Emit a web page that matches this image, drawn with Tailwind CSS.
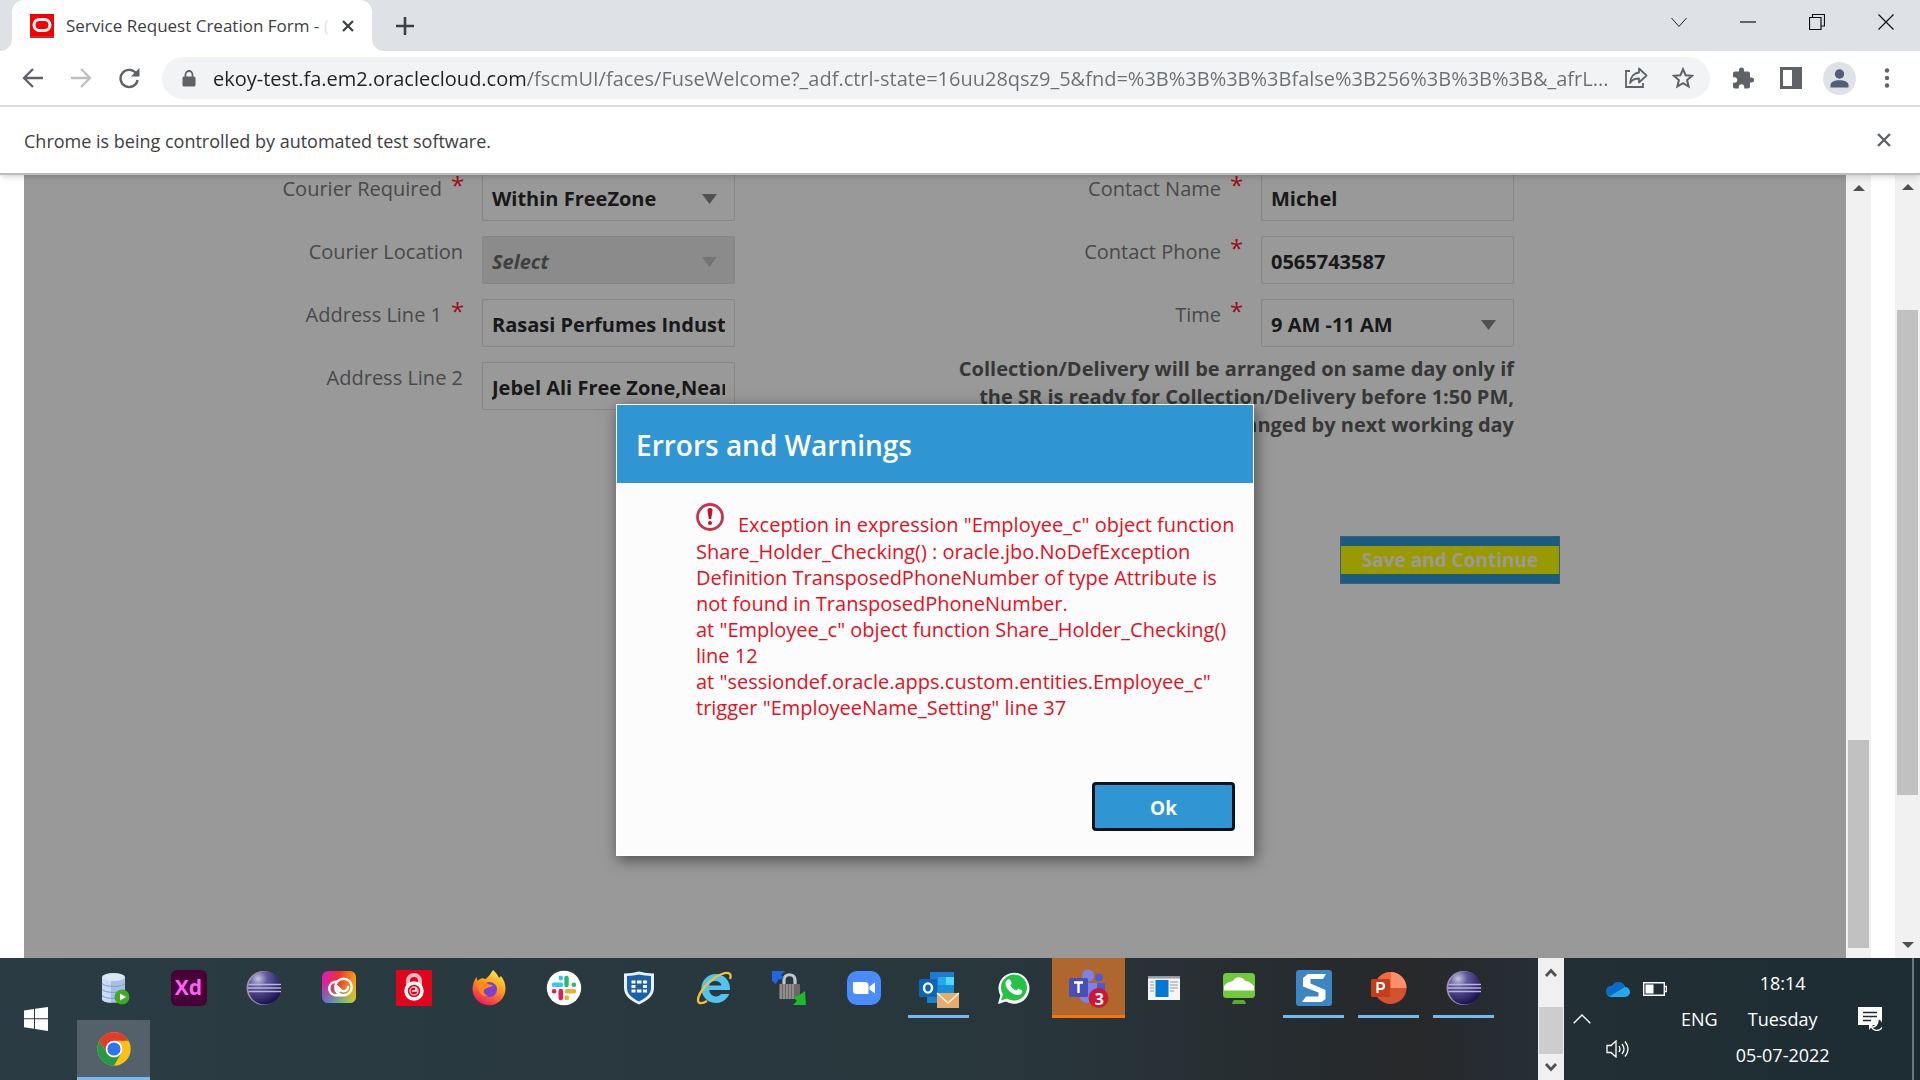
<!DOCTYPE html>
<html lang="en">
<head>
<meta charset="utf-8">
<title>Service Request Creation Form</title>
<script src="https://cdn.jsdelivr.net/npm/@tailwindcss/browser@4"></script>
</head>
<body class="flex h-screen flex-col overflow-hidden bg-white font-['Open_Sans','Noto_Sans',sans-serif] text-[#3c4043]">

<!-- Tab strip -->
<header class="flex h-[51px] shrink-0 items-stretch bg-[#dee1e6]">
  <div class="relative ml-3 flex w-[360px] items-center rounded-t-xl bg-white pr-4 pl-[18px]">
    <svg class="absolute bottom-0 -left-3 size-3" viewBox="0 0 12 12"><path d="M12 0v12H0A12 12 0 0 0 12 0z" fill="#fff"/></svg>
    <svg class="absolute -right-3 bottom-0 size-3" viewBox="0 0 12 12"><path d="M0 0v12h12A12 12 0 0 1 0 0z" fill="#fff"/></svg>
    <svg class="h-6 w-6 shrink-0" viewBox="0 0 24 24"><rect width="24" height="24" fill="#f80000"/><rect y="22" width="24" height="2" fill="#b33"/><rect x="4" y="5.500" width="16" height="11" rx="5.500" fill="none" stroke="#fff" stroke-width="3"/></svg>
    <span class="ml-3 w-[264px] overflow-hidden text-[17px] whitespace-nowrap">Service Request Creation Form - <span class="text-[#e4e4e4]">(</span></span>
    <button class="absolute right-[14px] grid size-5 place-items-center" aria-label="Close tab"><svg class="size-3" viewBox="0 0 12 12"><path d="M1 1l10 10M11 1L1 11" stroke="#3c4043" stroke-width="2.200"/></svg></button>
  </div>
  <button class="ml-[19px] grid w-7 place-items-center" aria-label="New tab"><svg class="size-[18px]" viewBox="0 0 18 18"><path d="M9 0v18M0 9h18" stroke="#3c4043" stroke-width="2.600"/></svg></button>
  <div class="ml-auto flex h-[43px] items-center gap-[53px] pr-[26px]">
    <button aria-label="Search tabs"><svg class="size-4" viewBox="0 0 16 16"><path d="M.5 4l7.500 8.500L15.500 4" fill="none" stroke="#222"/></svg></button>
    <button aria-label="Minimize"><svg class="size-4" viewBox="0 0 16 16"><path d="M0 8h16" stroke="#111" stroke-width="1.200"/></svg></button>
    <button aria-label="Restore"><svg class="size-4" viewBox="0 0 16 16"><path d="M.5 3.500h11.500v12H.500zM3.500 3.500v-3h12v11.500H12" fill="none" stroke="#111" stroke-width="1.200"/></svg></button>
    <button aria-label="Close"><svg class="size-4" viewBox="0 0 16 16"><path d="M.5.500l15 15M15.500.500l-15 15" stroke="#111" stroke-width="1.200"/></svg></button>
  </div>
</header>

<!-- Toolbar -->
<nav class="flex h-14 shrink-0 items-center border-b-2 border-[#dadce0] bg-white pr-7 pl-[22px]">
  <button aria-label="Back"><svg class="size-[22px]" viewBox="0 0 22 22"><path d="M21 11H2.500M11 2l-9 9 9 9" fill="none" stroke="#5f6368" stroke-width="2.300"/></svg></button>
  <button class="ml-[26px]" aria-label="Forward"><svg class="size-[22px]" viewBox="0 0 22 22"><path d="M1 11h18.500M11 2l9 9-9 9" fill="none" stroke="#bdbfc2" stroke-width="2.300"/></svg></button>
  <button class="ml-[26px]" aria-label="Reload"><svg class="size-[22px]" viewBox="0 0 22 22"><path d="M18.500 7A8.600 8.600 0 1 0 19.600 13" fill="none" stroke="#5f6368" stroke-width="2.400"/><path d="M21.500 1v8.500H13z" fill="#5f6368"/></svg></button>
  <div class="ml-[22px] flex h-[42px] min-w-0 flex-1 items-center rounded-full bg-[#f1f3f4] pr-4 pl-5">
    <svg class="h-[17px] w-[14px] shrink-0" viewBox="0 0 14 17"><path d="M2 6.500h10a1.500 1.500 0 0 1 1.500 1.500v7A1.500 1.500 0 0 1 12 16.500H2A1.500 1.500 0 0 1 .5 15V8A1.500 1.500 0 0 1 2 6.500z" fill="#5f6368"/><path d="M3.500 7V4.500a3.500 3.500 0 0 1 7 0V7" fill="none" stroke="#5f6368" stroke-width="1.800"/></svg>
    <input aria-label="Address" class="ml-[17px] min-w-0 flex-1 bg-linear-to-r from-[#202124] from-[313px] to-[#6b6f73] to-[313px] bg-clip-text pt-[2px] text-[20px] text-transparent outline-none" value="ekoy-test.fa.em2.oraclecloud.com/fscmUI/faces/FuseWelcome?_adf.ctrl-state=16uu28qsz9_5&amp;fnd=%3B%3B%3B%3Bfalse%3B256%3B%3B%3B&amp;_afrL...">
    <button class="ml-4" aria-label="Share"><svg class="size-6" viewBox="0 0 24 24"><path d="M6 5H2v16h17v-4" fill="none" stroke="#5f6368" stroke-width="1.800"/><path d="M15 2.500l7.500 7-7.500 7v-4c-4 0-7 1-9 4.500.5-6 4-10 9-10.500z" fill="none" stroke="#5f6368" stroke-width="1.800" stroke-linejoin="round"/></svg></button>
    <button class="ml-6" aria-label="Bookmark"><svg class="size-[22px]" viewBox="0 0 22 22"><path d="M11 2.200l2.600 6 6.400.600-4.900 4.300 1.500 6.400L11 16.100l-5.600 3.400 1.500-6.400L2 8.800l6.400-.6z" fill="none" stroke="#5f6368" stroke-width="2"/></svg></button>
  </div>
  <div class="ml-[22px] flex items-center">
    <button aria-label="Extensions"><svg class="size-[22px]" viewBox="0 0 22 22"><path d="M19.500 10.500H18V6.500a2 2 0 0 0-2-2h-4V3A2.500 2.500 0 0 0 7 3v1.500H3a2 2 0 0 0-2 2v3.800h1.500a2.700 2.700 0 0 1 0 5.400H1v3.800a2 2 0 0 0 2 2h3.800V20a2.700 2.700 0 0 1 5.400 0v1.500H16a2 2 0 0 0 2-2v-4h1.500a2.500 2.500 0 0 0 0-5z" fill="#5f6368"/></svg></button>
    <button class="ml-[26px]" aria-label="Side panel"><svg class="size-[22px]" viewBox="0 0 22 22"><path d="M0 0h22v22H0zM3 3v16h9V3z" fill="#5f6368" fill-rule="evenodd"/></svg></button>
    <button class="ml-[21px]" aria-label="Profile"><svg class="size-[33px]" viewBox="0 0 33 33"><circle cx="16.500" cy="16.500" r="16.500" fill="#dee1e6"/><circle cx="16.500" cy="12" r="4.700" fill="#525d76"/><path d="M7.500 25.500v-2.500c0-3 4-4.800 9-4.800s9 1.800 9 4.800v2.500z" fill="#525d76"/></svg></button>
    <button class="ml-[26px]" aria-label="Menu"><svg class="h-5 w-[10px]" viewBox="0 0 10 20"><g fill="#5f6368"><circle cx="5" cy="2.500" r="2.200"/><circle cx="5" cy="10" r="2.200"/><circle cx="5" cy="17.500" r="2.200"/></g></svg></button>
  </div>
</nav>

<!-- Automation notice -->
<div class="relative z-10 flex h-[68px] shrink-0 items-center justify-between border-b-2 border-[#bdbdbd] bg-white pr-7 pl-6 shadow-md">
  <p class="pt-[2px] text-[18px]">Chrome is being controlled by automated test software.</p>
  <button aria-label="Dismiss"><svg class="size-4" viewBox="0 0 16 16"><path d="M2 2l12 12M14 2L2 14" stroke="#5f6368" stroke-width="2.400"/></svg></button>
</div>

<!-- Page -->
<main class="flex min-h-0 flex-1 pl-6">
  <section class="relative min-w-0 flex-1 overflow-hidden bg-white">
    <form class="-mt-[2px] grid grid-cols-[711fr_779fr_332fr] text-[20px] leading-7 text-[#7a7a7a]">
      <div class="flex flex-col gap-[15px]">
        <div class="flex h-12 justify-end">
          <label for="f1" class="mr-[9px] pt-[2px]">Courier Required</label><span class="mr-[21px] w-[10px] text-[24px] leading-6 text-[#ff1a2a]">*</span>
          <div class="relative w-[253px]"><select id="f1" class="size-full appearance-none rounded-xs border border-[#dfdfdf] bg-white px-[9px] pt-1 font-bold text-[#2b2b2b]"><option>Within FreeZone</option></select><svg class="pointer-events-none absolute top-[21px] right-[18px] h-[10px] w-[15px]" viewBox="0 0 15 10"><path d="M0 0h15L7.500 10z" fill="#888"/></svg></div>
        </div>
        <div class="flex h-12 justify-end">
          <label for="f2" class="mr-[19px] pt-[2px]">Courier Location</label>
          <div class="relative w-[253px]"><select id="f2" disabled class="size-full appearance-none rounded-xs border border-[#dfdfdf] bg-[#e8e8e8] px-[9px] pt-1 font-bold text-[#6a6a6a] italic opacity-100"><option>Select</option></select><svg class="pointer-events-none absolute top-[21px] right-[18px] h-[10px] w-[15px]" viewBox="0 0 15 10"><path d="M0 0h15L7.500 10z" fill="#c4c4c4"/></svg></div>
        </div>
        <div class="flex h-12 justify-end">
          <label for="f3" class="mr-[9px] pt-[2px]">Address Line 1</label><span class="mr-[21px] w-[10px] text-[24px] leading-6 text-[#ff1a2a]">*</span>
          <input id="f3" class="w-[253px] rounded-xs border border-[#dfdfdf] px-[9px] pt-[3px] font-bold text-[#2b2b2b]" value="Rasasi Perfumes Industry">
        </div>
        <div class="flex h-12 justify-end">
          <label for="f4" class="mr-[19px] pt-[2px]">Address Line 2</label>
          <input id="f4" class="w-[253px] rounded-xs border border-[#dfdfdf] px-[9px] pt-[3px] font-bold text-[#2b2b2b]" value="Jebel Ali Free Zone,Near">
        </div>
      </div>
      <div class="flex flex-col gap-[15px]">
        <div class="flex h-12 justify-end">
          <label for="f5" class="mr-[9px] pt-[2px]">Contact Name</label><span class="mr-[21px] w-[10px] text-[24px] leading-6 text-[#ff1a2a]">*</span>
          <input id="f5" class="w-[253px] rounded-xs border border-[#dfdfdf] px-[9px] pt-[3px] font-bold text-[#2b2b2b]" value="Michel">
        </div>
        <div class="flex h-12 justify-end">
          <label for="f6" class="mr-[9px] pt-[2px]">Contact Phone</label><span class="mr-[21px] w-[10px] text-[24px] leading-6 text-[#ff1a2a]">*</span>
          <input id="f6" class="w-[253px] rounded-xs border border-[#dfdfdf] px-[9px] pt-[3px] font-bold text-[#2b2b2b]" value="0565743587">
        </div>
        <div class="flex h-12 justify-end">
          <label for="f7" class="mr-[9px] pt-[2px]">Time</label><span class="mr-[21px] w-[10px] text-[24px] leading-6 text-[#ff1a2a]">*</span>
          <div class="relative w-[253px]"><select id="f7" class="size-full appearance-none rounded-xs border border-[#dfdfdf] bg-white px-[9px] pt-1 font-bold text-[#2b2b2b]"><option>9 AM -11 AM</option></select><svg class="pointer-events-none absolute top-[21px] right-[18px] h-[10px] w-[15px]" viewBox="0 0 15 10"><path d="M0 0h15L7.500 10z" fill="#888"/></svg></div>
        </div>
        <p class="-mt-[7px] text-right font-bold text-[#5c5c5c]">Collection/Delivery will be arranged on same day only if<br>the SR is ready for Collection/Delivery before 1:50 PM,<br>otherwise it will be arranged by next working day</p>
      </div>
      <div class="col-start-2 row-start-2 -mr-[46px] flex justify-end pt-[97px]">
        <button type="button" class="flex h-12 w-[220px] items-center border border-[#5d9fc8] bg-[#2f96d3] text-[19px] font-bold text-white"><span class="h-7 w-full bg-[#ffff00] leading-[29px]">Save and Continue</span></button>
      </div>
    </form>

    <!-- Modal -->
    <div class="absolute inset-0 flex items-start justify-center bg-black/40 pt-[229px]">
      <div role="dialog" aria-labelledby="dt" class="w-[638px] border border-white bg-[#fcfcfc] shadow-[2px_4px_14px_rgba(0,0,0,0.5)]">
        <h2 id="dt" class="flex h-[78px] items-center bg-[#2f96d3] pt-[2px] pl-[19px] text-[28px] font-semibold text-white">Errors and Warnings</h2>
        <div class="h-[299px] pt-[20px] pr-4 pl-[79px] text-[20px] leading-[26px] whitespace-nowrap text-[#e5101f]">
          <p class="flex h-9 items-start"><svg class="mr-[14px] size-7 shrink-0" viewBox="0 0 28 28"><circle cx="14" cy="14" r="12.500" fill="#fff" stroke="#c8324a" stroke-width="2.800"/><path d="M11.500 7.500a2.500 2.500 0 0 1 5 0L15.200 16h-2.400z" fill="#c2102c"/><circle cx="14" cy="20" r="2" fill="#c2102c"/></svg><span class="pt-[9px]">Exception in expression "Employee_c" object function</span></p>
          <p>Share_Holder_Checking() : oracle.jbo.NoDefException<br>Definition TransposedPhoneNumber of type Attribute is<br>not found in TransposedPhoneNumber.<br>at "Employee_c" object function Share_Holder_Checking()<br>line 12<br>at "sessiondef.oracle.apps.custom.entities.Employee_c"<br>trigger "EmployeeName_Setting" line 37</p>
        </div>
        <div class="flex justify-end pr-[18px] pb-6">
          <button class="h-[49px] w-[143px] rounded-sm border-[3px] border-[#0c1218] bg-[#2f96d3] pt-[3px] text-[19px] font-bold text-white">Ok</button>
        </div>
      </div>
    </div>
  </section>

  <!-- Inner scrollbar -->
  <div class="flex w-[25px] flex-col items-center justify-between bg-[#f1f1f1] pt-[10px] pb-[10px]">
    <svg class="h-[6px] w-3" viewBox="0 0 12 6"><path d="M0 6l6-6 6 6z" fill="#505050"/></svg>
    <div class="h-[208px] w-[21px] bg-[#c1c1c1]"></div>
  </div>
  <div class="w-6 bg-white"></div>
  <!-- Outer scrollbar -->
  <div class="flex w-[25px] flex-col items-center bg-[#f1f1f1] pt-[9px] pb-[10px]">
    <svg class="h-[6px] w-3" viewBox="0 0 12 6"><path d="M0 6l6-6 6 6z" fill="#505050"/></svg>
    <div class="mt-[120px] h-[485px] w-[21px] bg-[#c1c1c1]"></div>
    <svg class="mt-auto h-[6px] w-3" viewBox="0 0 12 6"><path d="M0 0l6 6 6-6z" fill="#505050"/></svg>
  </div>
</main>

<!-- Taskbar -->
<footer class="flex h-[122px] shrink-0 bg-linear-to-r from-[#2a3b43] via-[#28363b] via-60% to-[#1d2b32] text-white">
  <button class="grid w-[75px] shrink-0 place-items-center pr-[3px]" aria-label="Start"><svg class="size-6" viewBox="0 0 24 24"><path d="M0 3.500l10-1.500v9.300H0zM11 1.800L24 0v11.300H11zM0 12.300h10v9.400L0 20.300zM11 12.300h13V24l-13-1.900z" fill="#fff"/></svg></button>
  <div class="flex min-w-0 flex-1 flex-col gap-[2px] bg-linear-to-r from-transparent from-65% via-[#27282a] via-92% to-[#262f36]">
    <div class="flex h-[60px] pl-px *:grid *:w-[75px] *:shrink-0 *:place-items-center">
      <button aria-label="SQL Developer"><svg class="size-9" viewBox="0 0 36 36"><path d="M6 7v22c0 5 23 5 23 0V7z" fill="#a9c0e4"/><path d="M6 7v22c0 2.500 5 3.600 9 3.700V8z" fill="#c9daf2"/><ellipse cx="17.500" cy="7" rx="11.500" ry="4" fill="#dbe7f7"/><path d="M6 13c0 4.500 23 4.500 23 0M6 19c0 4.500 23 4.500 23 0M6 25c0 4.500 23 4.500 23 0" fill="none" stroke="#7e9ccc"/><circle cx="26" cy="27" r="7.500" fill="#3faa22"/><path d="M24 23.500l6 3.500-6 3.500z" fill="#fff"/></svg></button>
      <button aria-label="Adobe XD"><span class="grid size-9 place-items-center rounded-md bg-[#470137] pb-[2px] text-[21px] leading-none font-bold text-[#ff61f6]">Xd</span></button>
      <button aria-label="Eclipse"><svg class="size-9" viewBox="0 0 36 36"><defs><radialGradient id="ec" cx=".3" cy=".22" r=".8"><stop offset="0" stop-color="#c8c4e0"/><stop offset=".35" stop-color="#5f5a9c"/><stop offset="1" stop-color="#1c1250"/></radialGradient></defs><circle cx="17.500" cy="18" r="17" fill="#a48fae"/><circle cx="18.700" cy="18" r="16.500" fill="url(#ec)"/><path d="M2.500 14.500h32.500M2 18h33.200M2.500 21.500h32.500" stroke="#b9b4dc" stroke-width="1.300"/></svg></button>
      <button aria-label="Creative Cloud"><svg class="size-9" viewBox="0 0 36 36"><defs><linearGradient id="cc" x1="0" y1="0" x2="1" y2=".2"><stop offset="0" stop-color="#d41ad0"/><stop offset=".5" stop-color="#f0302c"/><stop offset="1" stop-color="#f9a316"/></linearGradient><linearGradient id="cd" x1="0" y1="0" x2="1" y2="0"><stop offset="0" stop-color="#3f7df0"/><stop offset=".5" stop-color="#4cc3b0"/><stop offset="1" stop-color="#b8dc28"/></linearGradient><linearGradient id="ce" x1="0" y1="0" x2="0" y2="1"><stop offset=".35" stop-color="#fff" stop-opacity="0"/><stop offset="1" stop-color="#fff"/></linearGradient><mask id="cm"><rect width="36" height="36" fill="url(#ce)"/></mask></defs><rect x="1" y="1" width="34" height="32" rx="6" fill="url(#cc)"/><rect x="1" y="1" width="34" height="32" rx="6" fill="url(#cd)" mask="url(#cm)"/><g fill="none" stroke="#fff" stroke-width="2.400" stroke-linecap="round"><circle cx="22.500" cy="17" r="8.300"/><path d="M16 11.800a6.800 6.800 0 1 0-2 13.500h7"/><path d="M18.500 21.300l-2.500-2.500M27 17a4.300 4.300 0 0 1-7.500 2.800l-4-4"/></g></svg></button>
      <button aria-label="Secure access"><svg class="size-9" viewBox="0 0 36 36"><rect width="36" height="36" fill="#e0051c"/><path d="M12 15v-4a6 6 0 0 1 12 0v4" fill="none" stroke="#f6b9bf" stroke-width="4"/><circle cx="18" cy="21" r="8" fill="none" stroke="#fff" stroke-width="3.500"/><circle cx="18" cy="21" r="4" fill="none" stroke="#f6b9bf" stroke-width="1.500"/><path d="M16 21h4v-4" stroke="#fff" stroke-width="1.500" fill="none"/></svg></button>
      <button aria-label="Firefox"><svg class="size-9" viewBox="0 0 36 36"><defs><linearGradient id="ff" x1=".8" y1="0" x2=".3" y2="1"><stop offset="0" stop-color="#fff044"/><stop offset=".45" stop-color="#ff9a1f"/><stop offset="1" stop-color="#f2145c"/></linearGradient></defs><path d="M22 0c3 3 5 5 6 8l2-2c3 4 4.500 8 4.500 12.500A16.500 16.500 0 0 1 1.500 19c0-5 2-9 4-12l1 4c3-3 5-3.500 8-2 3-2 5-5 7.500-9z" fill="url(#ff)"/><circle cx="18.500" cy="19.500" r="7.500" fill="#7c3fd4"/><path d="M6 12c4 1 6-1 9 1 3 1 4 2 7 2-2 3-7 2-9 5-1 2 1 5 4 6-6 1-11-4-11-14z" fill="#ff8a1c"/></svg></button>
      <button aria-label="Slack"><svg class="size-9" viewBox="0 0 36 36"><circle cx="18" cy="18" r="17.200" fill="#fff"/><g stroke-width="4.500" stroke-linecap="round"><path d="M14.800 8v.2M8 14.700h7" stroke="#36c5f0"/><path d="M20.500 8v7M27.800 14.800h.2" stroke="#2eb67d"/><path d="M21 21.300h7M20.800 27.500v.4" stroke="#ecb22e"/><path d="M14.800 21v7M8 21.200h.2" stroke="#e01e5a"/></g></svg></button>
      <button aria-label="VPN client"><svg class="size-9" viewBox="0 0 36 36"><path d="M3 3.500C9 3.500 13 2.500 18 1.500c5 1 9 2 15 2V18c0 8-7 13-15 16.500C10 31 3 26 3 18z" fill="#e9f1f8"/><path d="M6 6c5 0 8-1 12-1.500 4 .5 8 1.500 12 1.500v12c0 6-5 10-12 13.500C11 28 6 24 6 18z" fill="#1d62a8"/><path d="M10.500 10.500h4v3h-4zM16 10.500h4.500v3H16zM22 10.500h4v3h-4zM10.500 15h4v3h-4zM22 15h4v3h-4zM10.500 19.500h4v3h-4zM16 19.500h4.500v3H16zM22 19.500h4v3h-4z" fill="#fff"/></svg></button>
      <button aria-label="Internet Explorer"><svg class="size-9" viewBox="0 0 36 36"><path d="M19.500 4a14.500 14.500 0 1 0 13.800 20h-8c-4 4.500-11.500 2.500-12-4H34C34.500 10.500 28 4 19.500 4zM13 15.500c1.500-6 11.500-6 12.500 0z" fill="#52c4f0" fill-rule="evenodd"/><path d="M34 9c2-5-1-8-8-5C14 8 2 23 2 30c0 4 4 4 9 1" fill="none" stroke="#f6c12c" stroke-width="2.300"/></svg></button>
      <button aria-label="WinSCP"><svg class="size-9" viewBox="0 0 36 36"><path d="M13 15v-5c0-7 11-7 11 0v5" fill="none" stroke="#c3c6c8" stroke-width="3.200"/><rect x="8" y="14" width="21" height="15" rx="1" fill="#6b6866"/><path d="M10 14v15M13 14v15M16 14v15M19 14v15M22 14v15" stroke="#aaa6a3" stroke-width="1.200"/><path d="M1 1h13l-4 4 3 3-6 2-2 4-4-3z" fill="#2266e0"/><path d="M35 35H22l4-4-4-4 5-1 7-5z" fill="#1fba2c"/></svg></button>
      <button aria-label="Zoom"><svg class="size-9" viewBox="0 0 36 36"><rect x="1" y="1" width="34" height="34" rx="10" fill="#4a8cff"/><path d="M7 12h12a3.500 3.500 0 0 1 3.500 3.500V24H10.500A3.500 3.500 0 0 1 7 20.500zM23.500 16.500l5.500-4v11l-5.500-4z" fill="#fff"/></svg></button>
      <button class="relative" aria-label="Outlook"><svg class="h-10 w-10" viewBox="0 -2 40 40"><rect x="11" y="2" width="24" height="25" fill="#1f7bd0"/><path d="M19 7h8v8h-8z" fill="#28a8ea"/><path d="M27 7h8v8h-8z" fill="#50d9ff"/><path d="M19 15h16v8H19z" fill="#1490df"/><rect x="8" y="26" width="12" height="7" fill="#1782c8"/><rect x="0" y="9" width="18" height="18" rx="1.500" fill="#0f64b5"/><ellipse cx="9" cy="18" rx="4" ry="4.600" fill="none" stroke="#fff" stroke-width="2.400"/><path d="M18 23h22v15H18z" fill="#e8ab68"/><path d="M18 23l11 10 11-10" fill="none" stroke="#fff6e8" stroke-width="1.500"/></svg><span class="absolute bottom-0 h-[3px] w-[61px] bg-[#76b9ed]"></span></button>
      <button aria-label="WhatsApp"><svg class="size-9" viewBox="0 0 36 36"><path d="M2 34l2.300-8.500A15.500 15.500 0 1 1 10 31.500z" fill="#fff"/><path d="M5 30.500l2-6A13 13 0 1 1 11 28.500z" fill="#25c343"/><path d="M12 9.500c1-.5 2-.3 2.400.6l1.200 2.800c.2.600-.4 1.400-1.200 2.300 1.400 2.800 3.300 4.300 6 5.400l1.800-2 3.800 1.800c.7.400.3 4-3.500 4.600-6 .5-13-6.500-13-11 0-2 1-3.800 2.500-4.500z" fill="#fff"/></svg></button>
      <button class="relative" aria-label="Teams, 3 notifications"><span class="absolute inset-x-px inset-y-0 border-b-[3px] border-[#f5760d] bg-[#b0672e]"></span><svg class="relative h-10 w-[42px]" viewBox="0 0 42 40"><circle cx="20" cy="7.500" r="6" fill="#7b83eb"/><circle cx="31" cy="9.500" r="4" fill="#5059c9"/><path d="M12 15h17v12c0 10-15 10-17 3z" fill="#7b83eb"/><path d="M29 15h8v10c0 4-4 5-8 4z" fill="#5059c9"/><rect x="1" y="10" width="19" height="19" rx="1.500" fill="#4650b8"/><path d="M6 14.500h9M10.500 14.500V25" stroke="#fff" stroke-width="2.400"/><circle cx="30.500" cy="30" r="10" fill="#d01534"/></svg><span class="absolute right-[22px] bottom-[9px] text-base leading-5 font-bold">3</span></button>
      <button aria-label="Explorer window"><svg class="size-8" viewBox="0 0 32 32"><rect y="4" width="32" height="24" fill="#f4f4f4"/><rect y="4" width="32" height="2.500" fill="#9a9a9a"/><rect x="7.500" y="8" width="13" height="17" fill="#0078d7"/><path d="M2 10h4M2 13h4M2 16h4M2 19h4M22 10h8M22 13h8M22 16h8M22 19h4" stroke="#999"/></svg></button>
      <button aria-label="Cloud desktop"><svg class="size-9" viewBox="0 0 36 36"><rect x="2" y="3" width="32" height="25" rx="3.500" fill="#72c93c"/><path d="M3 20.500v-4C6 11.500 10 12 12 11c2-5 10-5 12 0 3 0 7 2 9 5.500v4z" fill="#fff"/><path d="M13.500 30h9c1 0 2 2 2.500 4H11c.5-2 1.500-4 2.500-4z" fill="#5aa92c"/></svg></button>
      <button class="relative" aria-label="Snagit"><svg class="size-9" viewBox="0 0 36 36"><rect width="36" height="36" rx="3" fill="#3d86c6"/><path d="M30 4l-3 5H14.500v4.500L29.500 20v9l-4 3H6l4-5.500h12.500v-4L7 16.500V8l5-4z" fill="#fff"/></svg><span class="absolute bottom-0 h-[3px] w-[61px] bg-[#76b9ed]"></span></button>
      <button class="relative" aria-label="PowerPoint"><svg class="size-9" viewBox="0 0 36 36"><circle cx="19.500" cy="18" r="16" fill="#d35230"/><path d="M19.500 2a16 16 0 0 1 16 16h-16z" fill="#ff8f6b"/><path d="M19.500 2a16 16 0 0 0-16 16h16z" fill="#ed6c47"/><rect x="0" y="9" width="19" height="18" rx="1.500" fill="#c43e1c"/><path d="M6.500 23V13h3.500a3 3 0 0 1 0 6H6.500" fill="none" stroke="#fff" stroke-width="2.200"/></svg><span class="absolute bottom-0 h-[3px] w-[61px] bg-[#76b9ed]"></span></button>
      <button class="relative" aria-label="Eclipse workspace"><svg class="size-9" viewBox="0 0 36 36"><circle cx="17.500" cy="18" r="17" fill="#a48fae"/><circle cx="18.700" cy="18" r="16.500" fill="url(#ec)"/><path d="M2.500 14.500h32.500M2 18h33.200M2.500 21.500h32.500" stroke="#b9b4dc" stroke-width="1.300"/></svg><span class="absolute bottom-0 h-[3px] w-[61px] bg-[#76b9ed]"></span></button>
    </div>
    <button class="ml-[2px] grid h-[60px] w-[73px] place-items-center border-b-[3px] border-[#76b9ed] bg-[#54616a]" aria-label="Chrome"><svg class="size-9" viewBox="0 0 36 36"><circle cx="18" cy="18" r="16.700" fill="#fbc116"/><path d="M18 18L10.800 22.200 3.500 9.700A16.700 16.700 0 0 1 32.500 9.700H18z" fill="#e33b2e"/><path d="M3.500 9.700L10.800 22.200a8.300 8.300 0 0 0 14.400 0L18 34.700A16.700 16.700 0 0 1 3.500 9.700z" fill="#279847"/><circle cx="18" cy="18" r="8.300" fill="#fff"/><circle cx="18" cy="18" r="6.600" fill="#2a75f0"/></svg></button>
  </div>

  <div class="flex w-[26px] shrink-0 flex-col items-center bg-[#f0f0f0]">
    <svg class="mt-[10px] h-[9px] w-3" viewBox="0 0 12 9"><path d="M1 8l5-5.500L11 8" fill="none" stroke="#505050" stroke-width="2.800"/></svg>
    <div class="mt-[30px] h-[47px] w-6 bg-[#cdcdcd]"></div>
    <svg class="mt-[9px] h-[9px] w-3" viewBox="0 0 12 9"><path d="M1 1l5 5.500L11 1" fill="none" stroke="#505050" stroke-width="2.800"/></svg>
  </div>

  <div class="flex w-[356px] shrink-0 items-center text-[18px]">
    <button class="ml-[9px]" aria-label="Show hidden icons"><svg class="h-[10px] w-[18px]" viewBox="0 0 18 10"><path d="M.7 9.300L9 1l8.300 8.300" fill="none" stroke="#fff" stroke-width="1.400"/></svg></button>
    <div class="ml-[15px] flex flex-col gap-[43px]">
      <div class="flex items-center gap-[13px]">
        <svg class="h-4 w-6" viewBox="0 0 24 16"><path d="M6 6a7 7 0 0 1 13 0 5 5 0 0 1 0 10H5A5 5 0 0 1 6 6z" fill="#28a8ea"/><path d="M6 5a7 7 0 0 1 13 1L4 15A5 5 0 0 1 6 5z" fill="#0a6bc8"/></svg>
        <svg class="h-[14px] w-6" viewBox="0 0 24 14"><path d="M.7.700h20.600v12.600H.700zM22 4.500h1.500v5H22" fill="none" stroke="#fff" stroke-width="1.400"/><rect x="2.500" y="2.500" width="8" height="9" fill="#fff"/></svg>
      </div>
      <svg class="h-[18px] w-6" viewBox="0 0 24 18"><path d="M1 5.500h4L10 1v16l-5-4.500H1z" fill="none" stroke="#fff" stroke-width="1.300"/><path d="M13 6q2 3 0 6M16 4q4 5 0 10M19 1.500q6 7.500 0 15" fill="none" stroke="#fff" stroke-width="1.300"/></svg>
    </div>
    <span class="ml-[14px]">ENG</span>
    <div class="ml-[17px] w-[96px] text-center leading-9">18:14<br>Tuesday<br>05-07-2022</div>
    <button class="ml-auto" aria-label="Notifications"><svg class="size-6" viewBox="0 0 24 24"><path d="M0 0h24v18H15l-4 5v-5H0z" fill="#fff"/><path d="M5 5.500h14M5 9.500h14M5 13.500h8" stroke="#1d2b32" stroke-width="1.300"/><path d="M20 11.500a6 6 0 1 1-6.500 8.500c4 .5 7-3 6.500-8.500z" fill="#1d2b32" stroke="#fff" stroke-width="1.300"/></svg></button>
    <div class="mr-[6px] ml-[30px] h-full w-[2px] bg-[#6c777c]"></div>
  </div>
</footer>
</body>
</html>
